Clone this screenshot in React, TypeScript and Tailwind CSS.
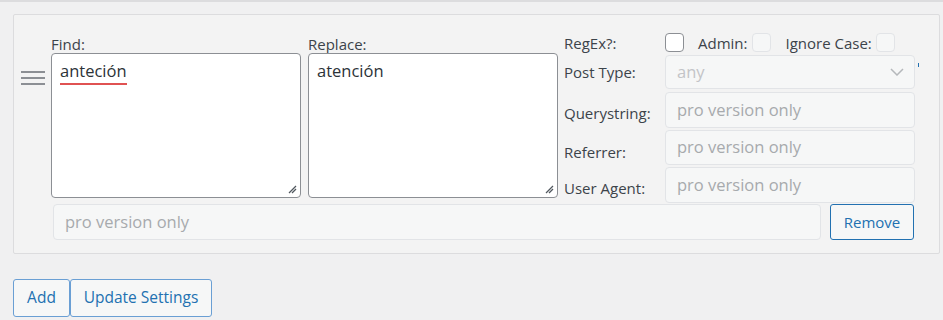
import React from "react";

const font = { fontFamily: '"Open Sans", "Noto Sans", Arial, sans-serif' };

function Grip() {
  return (
    <svg width="10" height="10" viewBox="0 0 10 10" className="absolute right-[3px] bottom-[3px]">
      <line x1="9" y1="2" x2="2" y2="9" stroke="#50575e" strokeWidth="1.2" />
      <line x1="9" y1="5" x2="5" y2="9" stroke="#50575e" strokeWidth="1.2" />
    </svg>
  );
}

function TextArea({ children }: { children?: React.ReactNode }) {
  return (
    <div className="relative w-[250px] h-[145px] bg-white border border-[#8c8f94] rounded-[4px] px-[8px] pt-[5px] text-[16.5px] text-[#2c3338]">
      {children}
      <Grip />
    </div>
  );
}

function ProInput({ w = "w-[250px]", h = "h-[36px]", text = "pro version only" }: { w?: string; h?: string; text?: string }) {
  return (
    <div className={`${w} ${h} flex items-center bg-[#f6f7f7] border border-[#e2e4e7] rounded-[4px] px-[11px] text-[16.5px] text-[#a7aaad]`}>
      {text}
    </div>
  );
}

export default function App() {
  return (
    <div style={font} className="w-[943px] h-[320px] bg-[#f0f0f1] border-t-2 border-[#dcdcde] pt-[12px] pl-[13px] overflow-hidden">
      <div className="w-[927px] h-[240px] bg-[#f3f3f3] border border-[#dcdcde] rounded-[2px] flex">
        <div className="w-[37px] pl-[7px] pt-[56px]">
          <div className="flex flex-col gap-[4px] w-[24px]">
            <div className="h-[2px] bg-[#8c8f94]" />
            <div className="h-[2px] bg-[#8c8f94]" />
            <div className="h-[2px] bg-[#8c8f94]" />
          </div>
        </div>
        <div className="flex flex-col pt-[15px]">
          <div className="flex">
            <div className="flex flex-col pt-[5px]">
              <div className="h-[18px] text-[15px] leading-[18px] text-[#3c434a]">Find:</div>
              <TextArea>
                <span className="border-b-2 border-[#e05252] pb-[1px] leading-[22px]">anteción</span>
              </TextArea>
            </div>
            <div className="flex flex-col pt-[5px] ml-[7px]">
              <div className="h-[18px] text-[15px] leading-[18px] text-[#3c434a]">Replace:</div>
              <TextArea>
                <span className="leading-[22px]">atención</span>
              </TextArea>
            </div>
            <div className="flex flex-col ml-[6px] text-[15px] text-[#3c434a]">
              <div className="flex items-center h-[24px]">
                <div className="w-[101px] pt-[2px]">RegEx?:</div>
                <div className="w-[19px] h-[19px] bg-white border border-[#8c8f94] rounded-[4px]" />
                <div className="ml-[14px] pt-[2px]">Admin:</div>
                <div className="ml-[5px] w-[19px] h-[19px] bg-[#f6f7f7] border border-[#e2e4e7] rounded-[4px]" />
                <div className="ml-[14px] pt-[2px]">Ignore Case:</div>
                <div className="ml-[4px] w-[19px] h-[19px] bg-[#f6f7f7] border border-[#e2e4e7] rounded-[4px]" />
              </div>
              <div className="flex items-center mt-[1px] relative">
                <div className="w-[101px]">Post Type:</div>
                <div className="w-[250px] h-[34px] flex items-center justify-between bg-[#f6f7f7] border border-[#e2e4e7] rounded-[4px] pl-[11px] pr-[10px] text-[16.5px] text-[#c3c4c7]">
                  <span>any</span>
                  <svg width="14" height="8" viewBox="0 0 14 8">
                    <path d="M1 1 L7 7 L13 1" fill="none" stroke="#b5b8bb" strokeWidth="1.5" />
                  </svg>
                </div>
                <div className="absolute left-[354px] top-[8px] w-[1px] h-[4px] bg-[#2271b1]" />
              </div>
              <div className="flex items-center mt-[3px]">
                <div className="w-[101px] pt-[6px]">Querystring:</div>
                <ProInput />
              </div>
              <div className="flex items-center mt-[2px]">
                <div className="w-[101px] pt-[9px]">Referrer:</div>
                <ProInput h="h-[35px]" />
              </div>
              <div className="flex items-center mt-[2px]">
                <div className="w-[101px] pt-[6px]">User Agent:</div>
                <ProInput />
              </div>
            </div>
          </div>
          <div className="flex mt-[1px] ml-[2px]">
            <ProInput w="w-[768px]" />
            <div className="ml-[9px] w-[84px] h-[36px] flex items-center justify-center bg-[#f6f7f7] border border-[#2271b1] rounded-[3px] text-[15px] text-[#2271b1]">
              Remove
            </div>
          </div>
        </div>
      </div>
      <div className="flex mt-[25px]">
        <div className="w-[57px] h-[38px] flex items-center justify-center bg-[#f6f7f7] border border-[#6a9fd4] rounded-[3px] text-[15.5px] text-[#2271b1]">
          Add
        </div>
        <div className="w-[142px] h-[38px] flex items-center justify-center bg-[#f6f7f7] border border-[#6a9fd4] rounded-[3px] text-[15.5px] text-[#2271b1]">
          Update Settings
        </div>
      </div>
    </div>
  );
}
